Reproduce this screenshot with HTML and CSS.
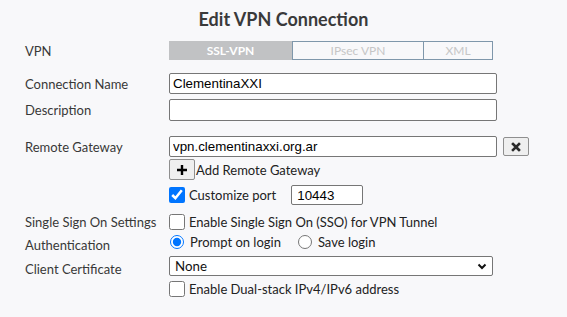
FILE: index.html
```html
<!DOCTYPE html>
<html>
<head>
  <meta charset="UTF-8">
  <title>Edit VPN Connection</title>
  <link rel="stylesheet" href="styles.css">
</head>
<body>
  <div class="dialog">
    <h1 class="title">Edit VPN Connection</h1>

    <div class="row row-vpn">
      <span class="label">VPN</span>
      <div class="segmented">
        <span class="seg seg-active">SSL-VPN</span>
        <span class="seg seg-ipsec">IPsec VPN</span>
        <span class="seg seg-xml">XML</span>
      </div>
    </div>

    <div class="row row-name">
      <span class="label">Connection Name</span>
      <input class="text-input wide" type="text" value="ClementinaXXI">
    </div>

    <div class="row row-desc">
      <span class="label">Description</span>
      <input class="text-input wide" type="text" value="">
    </div>

    <div class="row row-gateway">
      <span class="label">Remote Gateway</span>
      <input class="text-input wide" type="text" value="vpn.clementinaxxi.org.ar">
      <button class="icon-btn remove-btn" type="button">
        <svg width="10" height="10" viewBox="0 0 10 10">
          <path d="M2 2 L8 8 M8 2 L2 8" stroke="#2b2b2b" stroke-width="2.6" stroke-linecap="square"/>
        </svg>
      </button>
    </div>

    <div class="row row-add">
      <span class="label"></span>
      <button class="icon-btn add-btn" type="button">
        <svg width="12" height="12" viewBox="0 0 12 12">
          <path d="M6 1 V11 M1 6 H11" stroke="#000" stroke-width="2.4"/>
        </svg>
      </button>
      <span class="option-text">Add Remote Gateway</span>
    </div>

    <div class="row row-port">
      <span class="label"></span>
      <label class="check">
        <input type="checkbox" checked>
        <span class="option-text">Customize port</span>
      </label>
      <input class="text-input port-input" type="text" value="10443">
    </div>

    <div class="row row-sso">
      <span class="label">Single Sign On Settings</span>
      <label class="check">
        <input type="checkbox">
        <span class="option-text">Enable Single Sign On (SSO) for VPN Tunnel</span>
      </label>
    </div>

    <div class="row row-auth">
      <span class="label label-low">Authentication</span>
      <label class="radio">
        <input type="radio" name="auth" checked>
        <span class="option-text">Prompt on login</span>
      </label>
      <label class="radio radio-save">
        <input type="radio" name="auth">
        <span class="option-text">Save login</span>
      </label>
    </div>

    <div class="row row-cert">
      <span class="label label-low">Client Certificate</span>
      <div class="select-box">
        <span>None</span>
        <svg class="chevron" width="10" height="7" viewBox="0 0 10 7">
          <path d="M1.5 1.5 L5 5 L8.5 1.5" stroke="#111" stroke-width="2" fill="none"/>
        </svg>
      </div>
    </div>

    <div class="row row-dual">
      <span class="label"></span>
      <label class="check">
        <input type="checkbox">
        <span class="option-text">Enable Dual-stack IPv4/IPv6 address</span>
      </label>
    </div>
  </div>
</body>
</html>
```

FILE: styles.css
```css
* {
  box-sizing: border-box;
  margin: 0;
  padding: 0;
}

body {
  background: #f8f8fa;
  font-family: 'Lato', sans-serif;
  color: #333;
}

.dialog {
  width: 567px;
  height: 317px;
  padding: 0 0 0 24px;
}

.title {
  text-align: center;
  font-size: 18px;
  font-weight: 700;
  color: #3a3a3a;
  height: 36px;
  line-height: 38px;
  padding-right: 24px;
}

.row {
  display: flex;
  align-items: center;
}

.label {
  width: 145px;
  flex-shrink: 0;
  font-size: 13px;
  color: #383838;
  padding-left: 1px;
}

.label-low {
  padding-top: 5px;
}

.row-vpn { margin-top: 5px; height: 19px; }
.row-name { margin-top: 13px; height: 21px; }
.row-desc { margin-top: 5px; height: 22px; }
.row-gateway { margin-top: 15px; height: 21px; }
.row-add { margin-top: 2px; height: 21px; }
.row-port { margin-top: 5px; height: 20px; }
.row-sso { margin-top: 7px; height: 20px; }
.row-auth { margin-top: 1px; height: 18px; }
.row-cert { margin-top: 5px; height: 20px; }
.row-dual { margin-top: 4px; height: 17px; }

/* segmented control */
.segmented {
  display: flex;
  height: 19px;
  font-size: 12px;
}

.seg {
  display: flex;
  align-items: center;
  justify-content: center;
  border: 1px solid #7f97ab;
  color: #c6c6c6;
}

.seg-active {
  width: 123px;
  background: #c1c2c4;
  border-color: #c1c2c4;
  color: #fff;
  font-weight: 700;
}

.seg-ipsec {
  width: 132px;
}

.seg-xml {
  width: 69px;
  border-left: none;
}

/* inputs */
.text-input {
  height: 100%;
  border: 1px solid #767676;
  border-radius: 2px;
  background: #fff;
  font-family: 'Liberation Sans', Arial, sans-serif;
  font-size: 13.33px;
  color: #000;
  padding: 0 3px;
  outline: none;
}

.wide {
  width: 328px;
}

.port-input {
  width: 72px;
  margin-left: 15px;
  padding: 0 5px;
}

.icon-btn {
  display: flex;
  align-items: center;
  justify-content: center;
  background: #efefef;
  border: 1px solid #8f8f8f;
  border-radius: 2px;
}

.remove-btn {
  width: 26px;
  height: 19px;
  margin-left: 6px;
}

.add-btn {
  width: 26px;
  height: 21px;
  margin-right: 1px;
}

.option-text {
  font-size: 13px;
  color: #222;
  white-space: nowrap;
}

.check,
.radio {
  display: flex;
  align-items: center;
}

.check input {
  width: 16px;
  height: 16px;
  margin: 0 4px 0 0;
}

.radio input {
  width: 14px;
  height: 14px;
  margin: 0 6px 0 1px;
}

.radio-save {
  margin-left: 16px;
}

/* select */
.select-box {
  width: 324px;
  height: 20px;
  display: flex;
  align-items: center;
  justify-content: space-between;
  border: 1px solid #767676;
  border-radius: 2px;
  background: #fff;
  padding: 0 4px 0 5px;
  font-size: 13.3px;
  color: #111;
}

.chevron {
  margin-right: 1px;
}
```
